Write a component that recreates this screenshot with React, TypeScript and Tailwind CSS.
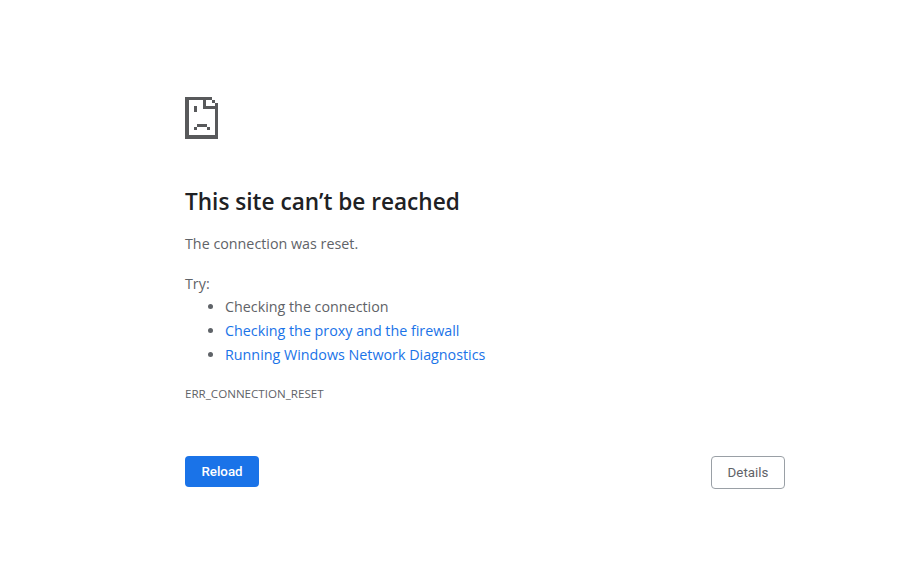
const font = "font-['Open_Sans','Noto_Sans',sans-serif]";

function SadTab() {
  return (
    <svg width="33" height="42" viewBox="0 0 33 42" shapeRendering="crispEdges" fill="#58595b" className="block">
      <rect x="0" y="0" width="27" height="3" />
      <rect x="0" y="0" width="4" height="42" />
      <rect x="0" y="38" width="33" height="4" />
      <rect x="30" y="6" width="3" height="36" />
      <rect x="18" y="0" width="3" height="12" />
      <rect x="18" y="9" width="15" height="3" />
      <rect x="27" y="3" width="3" height="3" />
      <rect x="9" y="9" width="3" height="6" />
      <rect x="12" y="27" width="10" height="3" />
      <rect x="9" y="30" width="3" height="3" />
      <rect x="22" y="30" width="3" height="3" />
    </svg>
  );
}

export default function App() {
  return (
    <div className={`min-h-[579px] w-full bg-white pl-[185px] pt-[97px] ${font}`}>
      <div className="w-[600px]">
        <SadTab />
        <h1 className="mt-[48px] text-[22.6px] leading-[30px] font-semibold text-[#202124]">This site can’t be reached</h1>
        <p className="mt-[15px] text-[14.3px] leading-[24px] text-[#5f6368]">The connection was reset.</p>
        <p className="mt-[16px] text-[14.3px] leading-[24px] text-[#5f6368]">Try:</p>
        <ul className="-mt-px list-disc pl-[40px] text-[14.3px] leading-[24px] text-[#5f6368] marker:text-[#5f6368]">
          <li>Checking the connection</li>
          <li><a className="text-[#1a73e8]">Checking the proxy and the firewall</a></li>
          <li><a className="text-[#1a73e8]">Running Windows Network Diagnostics</a></li>
        </ul>
        <div className="mt-[19px] text-[11.6px] leading-[16px] text-[#5f6368]">ERR_CONNECTION_RESET</div>
        <div className="mt-[54px] flex items-start justify-between font-['Roboto',sans-serif] text-[13.33px]">
          <button className="h-[31px] w-[74px] rounded-[4px] bg-[#1a73e8] font-medium text-white">Reload</button>
          <button className="h-[33px] w-[74px] rounded-[4px] border border-[#9aa0a6] bg-white text-[#5f6368]">Details</button>
        </div>
      </div>
    </div>
  );
}
